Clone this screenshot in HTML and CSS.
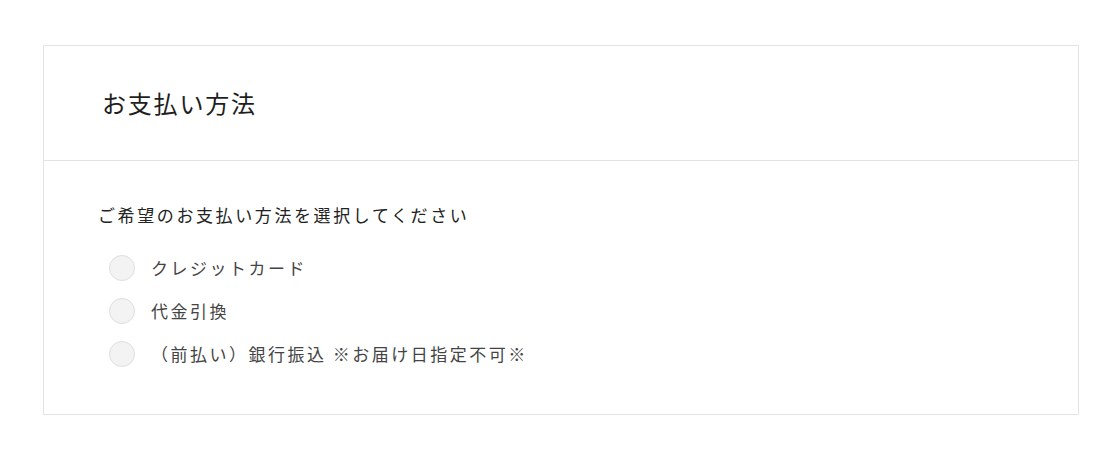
FILE: index.html
```html
<!DOCTYPE html>
<html lang="ja">
<head>
<meta charset="utf-8">
<link rel="stylesheet" href="styles.css">
</head>
<body>
<div class="page">
  <section class="card">
    <header class="card-head">
      <h2 class="title">お支払い方法</h2>
    </header>
    <div class="card-body">
      <p class="lead">ご希望のお支払い方法を選択してください</p>
      <ul class="options">
        <li class="option"><span class="radio"></span><span class="label">クレジットカード</span></li>
        <li class="option"><span class="radio"></span><span class="label">代金引換</span></li>
        <li class="option"><span class="radio"></span><span class="label">（前払い）銀行振込 ※お届け日指定不可※</span></li>
      </ul>
    </div>
  </section>
</div>
</body>
</html>
```

FILE: styles.css
```css
html, body {
  margin: 0;
  padding: 0;
  background: #fff;
}
body {
  font-family: "Noto Sans CJK JP", "Noto Sans", sans-serif;
  color: #222;
}
.page {
  padding: 45px 41px 0 43px;
}
.card {
  border: 1px solid #e4e4e1;
  box-sizing: border-box;
}
.card-head {
  height: 114px;
  display: flex;
  align-items: center;
  padding-left: 58px;
  border-bottom: 1px solid #e4e4e1;
}
.title {
  margin: 0;
  font-size: 24px;
  font-weight: 400;
  letter-spacing: 1.8px;
  line-height: 30px;
  color: #1e1e1e;
}
.card-body {
  padding: 44px 54px 39px;
}
.lead {
  margin: 0;
  font-size: 17px;
  line-height: 20px;
  letter-spacing: 2.6px;
  color: #222;
}
.options {
  list-style: none;
  margin: 21px 0 0;
  padding: 0;
}
.option {
  height: 43px;
  display: flex;
  align-items: center;
}
.radio {
  width: 26px;
  height: 26px;
  box-sizing: border-box;
  border: 1px solid #dedede;
  border-radius: 50%;
  background: #f3f3f3;
  margin-left: 11px;
  margin-right: 16px;
  flex-shrink: 0;
}
.label {
  font-size: 17px;
  line-height: 20px;
  letter-spacing: 2.5px;
  color: #444;
}
```
